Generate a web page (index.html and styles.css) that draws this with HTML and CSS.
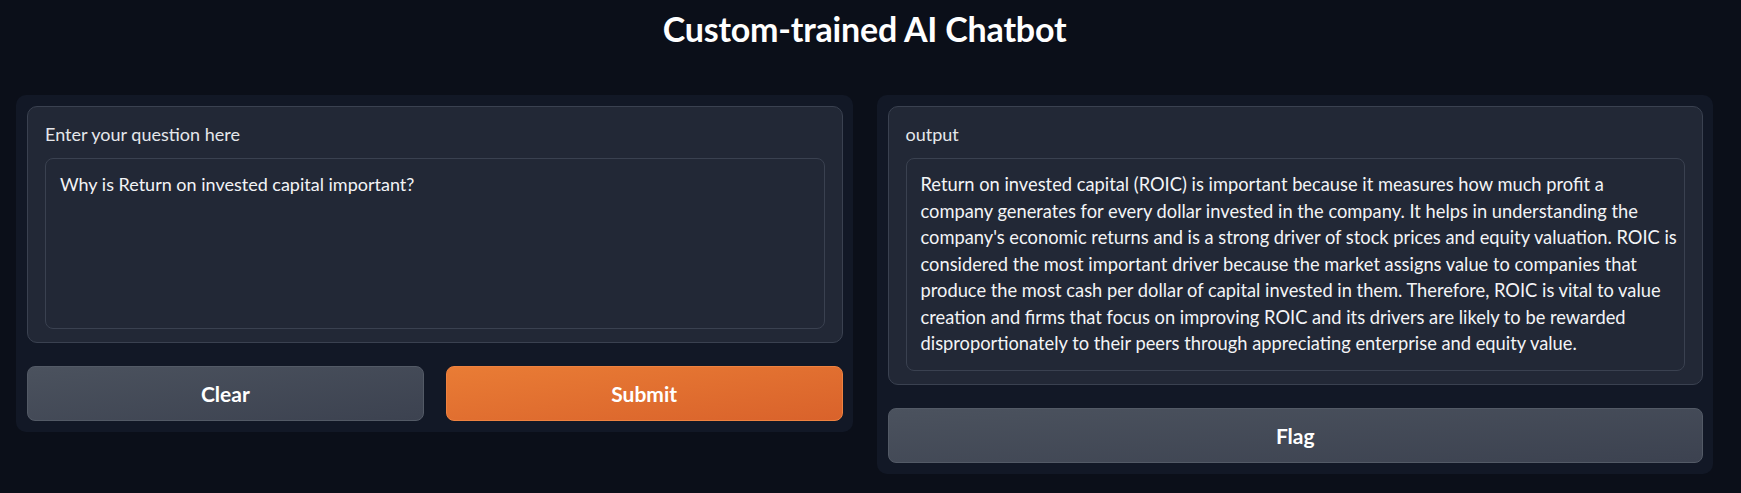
FILE: index.html
```html
<!DOCTYPE html>
<html lang="en">
<head>
<meta charset="utf-8">
<title>Custom-trained AI Chatbot</title>
<link rel="stylesheet" href="styles.css">
</head>
<body>
<div class="app">
  <h1 class="title">Custom-trained AI Chatbot</h1>
  <div class="row">
    <div class="panel">
      <div class="block">
        <label class="label">Enter your question here</label>
        <div class="textarea input-box">Why is Return on invested capital important?</div>
      </div>
      <div class="btn-row">
        <button class="btn secondary">Clear</button>
        <button class="btn primary">Submit</button>
      </div>
    </div>
    <div class="panel">
      <div class="block">
        <label class="label">output</label>
        <div class="textarea output-box">Return on invested capital (ROIC) is important because it measures how much profit a<br>company generates for every dollar invested in the company. It helps in understanding the<br>company's economic returns and is a strong driver of stock prices and equity valuation. ROIC is<br>considered the most important driver because the market assigns value to companies that<br>produce the most cash per dollar of capital invested in them. Therefore, ROIC is vital to value<br>creation and firms that focus on improving ROIC and its drivers are likely to be rewarded<br>disproportionately to their peers through appreciating enterprise and equity value.</div>
      </div>
      <button class="btn secondary">Flag</button>
    </div>
  </div>
</div>
</body>
</html>
```
FILE: styles.css
```css
* { box-sizing: border-box; }
html, body { margin: 0; padding: 0; }
body {
  background: #0b0f19;
  color: #f3f4f6;
  font-family: Lato, "Noto Sans", sans-serif;
  width: 1741px;
  height: 493px;
  overflow: hidden;
}
.app {
  padding: 0 28px 0 16px;
}
.title {
  margin: 0;
  padding-top: 9px;
  height: 95px;
  text-align: center;
  font-size: 34px;
  font-weight: 700;
  line-height: 40px;
  color: #ffffff;
  letter-spacing: -0.2px;
}
.row {
  display: flex;
  gap: 24px;
  align-items: flex-start;
}
.panel {
  flex: 1 1 0;
  min-width: 0;
  background: #121826;
  border-radius: 10px;
  padding: 11px 10px 11px 11px;
  display: flex;
  flex-direction: column;
  gap: 23px;
}
.block {
  background: #222836;
  border: 1px solid #3a4150;
  border-radius: 10px;
  padding: 16px 17px 13px 17px;
  display: flex;
  flex-direction: column;
  gap: 13px;
}
.label {
  font-size: 18px;
  line-height: 22px;
  color: #e5e7eb;
}
.textarea {
  background: #222836;
  border: 1px solid #3a4150;
  border-radius: 8px;
  padding: 12px 12px 12px 14px;
  font-size: 18px;
  line-height: 26.5px;
  color: #f3f4f6;
}
.output-box {
  font-size: 18.3px;
  padding-right: 4px;
  white-space: nowrap;
  overflow: hidden;
  height: 213px;
}
.input-box { height: 171px; }
.btn-row {
  display: flex;
  gap: 22px;
}
.btn-row .btn { flex: 1 1 0; }
.btn {
  height: 55px;
  border-radius: 8px;
  font-family: Lato, "Noto Sans", sans-serif;
  font-size: 21px;
  font-weight: 700;
  color: #ffffff;
  cursor: pointer;
}
.secondary {
  background: linear-gradient(to bottom right, #4b525e, #3c4250);
  border: 1px solid #535a66;
}
.primary {
  background: linear-gradient(to bottom right, #e97c35, #d9622b);
  border: 1px solid #ee8240;
}
```
